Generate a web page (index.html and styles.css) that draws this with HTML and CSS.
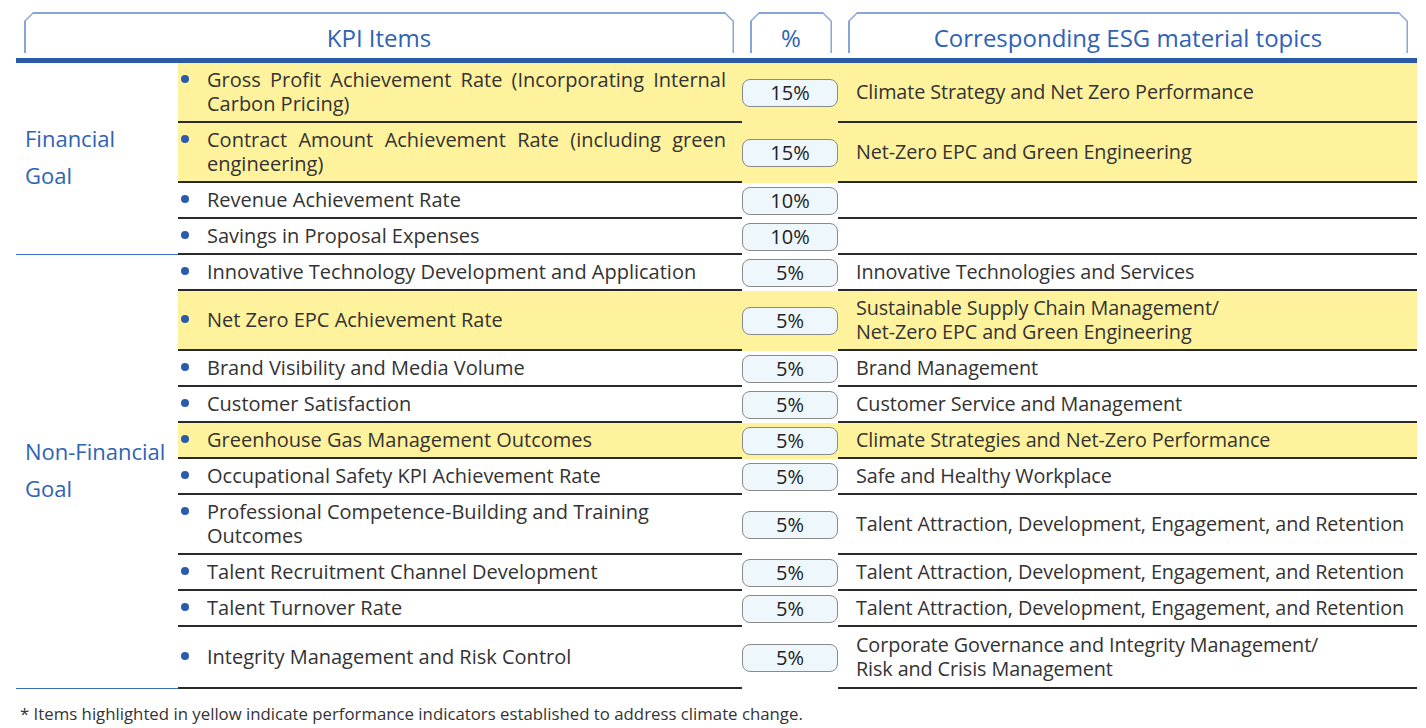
FILE: index.html
```html
<!DOCTYPE html>
<html lang="en">
<head>
<meta charset="utf-8">
<title>KPI Items</title>
<link rel="stylesheet" href="styles.css">
</head>
<body>
<div class="page">
  <div class="tabs">
    <div class="tab tab-kpi"><div class="tab-inner">KPI Items</div></div>
    <div class="tab tab-pct"><div class="tab-inner">%</div></div>
    <div class="tab tab-esg"><div class="tab-inner">Corresponding ESG material topics</div></div>
  </div>
  <div class="rule"></div>

  <div class="group">
    <div class="label">Financial<br>Goal</div>
    <div class="rows">
      <div class="row hl">
        <div class="kpi"><div class="item"><span class="dot"></span><span class="kpi-text justify">Gross Profit Achievement Rate (Incorporating Internal Carbon Pricing)</span></div></div>
        <div class="pct"><span class="pill">15%</span></div>
        <div class="esg">Climate Strategy and Net Zero Performance</div>
      </div>
      <div class="row hl">
        <div class="kpi"><div class="item"><span class="dot"></span><span class="kpi-text justify">Contract Amount Achievement Rate (including green engineering)</span></div></div>
        <div class="pct"><span class="pill">15%</span></div>
        <div class="esg">Net-Zero EPC and Green Engineering</div>
      </div>
      <div class="row">
        <div class="kpi"><div class="item"><span class="dot"></span><span class="kpi-text">Revenue Achievement Rate</span></div></div>
        <div class="pct"><span class="pill">10%</span></div>
        <div class="esg"></div>
      </div>
      <div class="row">
        <div class="kpi"><div class="item"><span class="dot"></span><span class="kpi-text">Savings in Proposal Expenses</span></div></div>
        <div class="pct"><span class="pill">10%</span></div>
        <div class="esg"></div>
      </div>
    </div>
  </div>

  <div class="group">
    <div class="label">Non-Financial<br>Goal</div>
    <div class="rows">
      <div class="row">
        <div class="kpi"><div class="item"><span class="dot"></span><span class="kpi-text">Innovative Technology Development and Application</span></div></div>
        <div class="pct"><span class="pill">5%</span></div>
        <div class="esg">Innovative Technologies and Services</div>
      </div>
      <div class="row hl">
        <div class="kpi"><div class="item"><span class="dot"></span><span class="kpi-text">Net Zero EPC Achievement Rate</span></div></div>
        <div class="pct"><span class="pill">5%</span></div>
        <div class="esg">Sustainable Supply Chain Management/<br>Net-Zero EPC and Green Engineering</div>
      </div>
      <div class="row">
        <div class="kpi"><div class="item"><span class="dot"></span><span class="kpi-text">Brand Visibility and Media Volume</span></div></div>
        <div class="pct"><span class="pill">5%</span></div>
        <div class="esg">Brand Management</div>
      </div>
      <div class="row">
        <div class="kpi"><div class="item"><span class="dot"></span><span class="kpi-text">Customer Satisfaction</span></div></div>
        <div class="pct"><span class="pill">5%</span></div>
        <div class="esg">Customer Service and Management</div>
      </div>
      <div class="row hl">
        <div class="kpi"><div class="item"><span class="dot"></span><span class="kpi-text">Greenhouse Gas Management Outcomes</span></div></div>
        <div class="pct"><span class="pill">5%</span></div>
        <div class="esg">Climate Strategies and Net-Zero Performance</div>
      </div>
      <div class="row">
        <div class="kpi"><div class="item"><span class="dot"></span><span class="kpi-text">Occupational Safety KPI Achievement Rate</span></div></div>
        <div class="pct"><span class="pill">5%</span></div>
        <div class="esg">Safe and Healthy Workplace</div>
      </div>
      <div class="row">
        <div class="kpi"><div class="item"><span class="dot"></span><span class="kpi-text">Professional Competence-Building and Training Outcomes</span></div></div>
        <div class="pct"><span class="pill">5%</span></div>
        <div class="esg">Talent Attraction, Development, Engagement, and Retention</div>
      </div>
      <div class="row">
        <div class="kpi"><div class="item"><span class="dot"></span><span class="kpi-text">Talent Recruitment Channel Development</span></div></div>
        <div class="pct"><span class="pill">5%</span></div>
        <div class="esg">Talent Attraction, Development, Engagement, and Retention</div>
      </div>
      <div class="row">
        <div class="kpi"><div class="item"><span class="dot"></span><span class="kpi-text">Talent Turnover Rate</span></div></div>
        <div class="pct"><span class="pill">5%</span></div>
        <div class="esg">Talent Attraction, Development, Engagement, and Retention</div>
      </div>
      <div class="row last">
        <div class="kpi"><div class="item"><span class="dot"></span><span class="kpi-text">Integrity Management and Risk Control</span></div></div>
        <div class="pct"><span class="pill">5%</span></div>
        <div class="esg">Corporate Governance and Integrity Management/<br>Risk and Crisis Management</div>
      </div>
    </div>
  </div>

  <p class="note">* Items highlighted in yellow indicate performance indicators established to address climate change.</p>
</div>
</body>
</html>
```

FILE: styles.css
```css
* { box-sizing: border-box; }

html, body {
  margin: 0;
  background: #ffffff;
}

.page {
  width: 1417px;
  padding: 12px 0 0 16px;
  font-family: "Open Sans", "Liberation Sans", sans-serif;
  color: #333333;
}

.tabs {
  display: flex;
  gap: 16px;
  padding-left: 8px;
  height: 41px;
  margin-bottom: 5px;
}

.tab {
  background: #86a6d8;
  padding: 1.5px 1.5px 0;
  clip-path: polygon(0 9px, 9px 0, calc(100% - 9px) 0, 100% 9px, 100% 100%, 0 100%);
}

.tab-kpi { width: 710px; }
.tab-pct { width: 82px; }
.tab-esg { width: 560px; }

.tab-inner {
  height: 100%;
  background: #ffffff;
  clip-path: polygon(0 8px, 8px 0, calc(100% - 8px) 0, 100% 8px, 100% 100%, 0 100%);
  display: flex;
  align-items: center;
  justify-content: center;
  padding-top: 9px;
  color: #2f62b4;
  font-size: 24px;
  line-height: 30px;
}

.rule {
  width: 1401px;
  height: 5px;
  background: #2b5aa8;
}

.group {
  display: flex;
}

.label {
  width: 162px;
  flex: none;
  display: flex;
  align-items: center;
  padding-left: 9px;
  padding-bottom: 3px;
  border-bottom: 1px solid #3a6cc0;
  color: #2f63b3;
  font-size: 22px;
  line-height: 37px;
}

.rows {
  width: 1239px;
}

.row {
  display: grid;
  grid-template-columns: 564px 96px 579px;
}

.row.hl {
  background: #fff29c;
}

.kpi, .esg {
  border-bottom: 2px solid #2a2a2a;
  display: flex;
  align-items: center;
  font-size: 20px;
  line-height: 24px;
  padding-top: 5px;
  padding-bottom: 5px;
  min-height: 36px;
}

.row.last .kpi, .row.last .esg {
  padding-top: 6px;
  padding-bottom: 6px;
}

.kpi {
  padding-left: 3px;
  padding-right: 16px;
}

.item {
  display: flex;
  align-items: flex-start;
  width: 100%;
}

.dot {
  flex: none;
  width: 8px;
  height: 8px;
  margin-top: 7px;
  margin-right: 18px;
  border-radius: 50%;
  background: #2a5cab;
}

.kpi-text {
  flex: 1;
}

.kpi-text.justify {
  text-align: justify;
}

.esg {
  padding-left: 18px;
  font-size: 19.8px;
  letter-spacing: -0.1px;
}

.pct {
  display: flex;
  align-items: center;
  justify-content: center;
}

.pill {
  width: 97px;
  height: 28px;
  padding-bottom: 2px;
  border: 1.5px solid #8a8a8a;
  border-radius: 8px;
  background: #eef7fc;
  display: flex;
  align-items: center;
  justify-content: center;
  font-size: 20px;
  color: #222222;
}

.note {
  margin: 14px 0 0 4px;
  font-size: 16.8px;
  line-height: 22px;
  color: #333333;
}
```
